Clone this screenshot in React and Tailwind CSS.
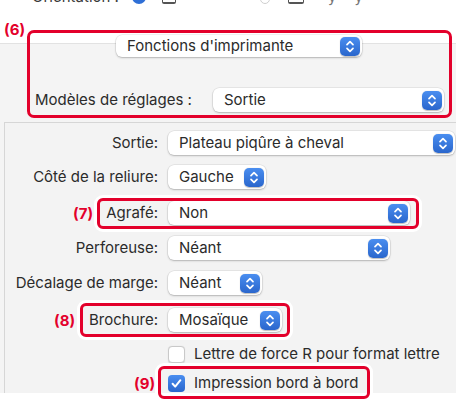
import React from 'react';

// Up/down stepper used by macOS popup buttons
function Stepper() {
  return (
    <span className="flex h-[19px] w-[20px] shrink-0 items-center justify-center rounded-[5px] bg-linear-to-b from-[#4a8ef0] to-[#2a66cc] shadow-[0_0.5px_1px_rgba(0,0,0,0.25)]">
      <svg width="20" height="19" viewBox="0 0 20 19" fill="none">
        <path d="M7 7.6 L10 4.6 L13 7.6" stroke="white" strokeWidth="1.7" strokeLinecap="round" strokeLinejoin="round" />
        <path d="M7 11.4 L10 14.4 L13 11.4" stroke="white" strokeWidth="1.7" strokeLinecap="round" strokeLinejoin="round" />
      </svg>
    </span>
  );
}

function Popup({ text, className }) {
  return (
    <div className={`flex items-center rounded-[6px] bg-white pl-[11px] pr-[2px] shadow-[0_0_0_0.5px_rgba(0,0,0,0.10),0_1px_2px_rgba(0,0,0,0.22)] ${className}`}>
      <span className="whitespace-nowrap">{text}</span>
      <span className="ml-auto">
        <Stepper />
      </span>
    </div>
  );
}

function Row({ label, text, popupClass, className = '' }) {
  return (
    <div className={`flex h-[24px] items-center ${className}`}>
      <span className="w-[153px] whitespace-nowrap text-right">{label}</span>
      <Popup text={text} className={`ml-[10px] h-[24px] ${popupClass}`} />
    </div>
  );
}

function Check({ checked }) {
  return checked ? (
    <span className="flex h-[17px] w-[17px] shrink-0 items-center justify-center rounded-[4px] bg-linear-to-b from-[#4a8ef0] to-[#2a66cc]">
      <svg width="13" height="13" viewBox="0 0 13 13" fill="none">
        <path d="M2.6 6.8 L5.2 9.6 L10.4 3.2" stroke="white" strokeWidth="2" strokeLinecap="round" strokeLinejoin="round" />
      </svg>
    </span>
  ) : (
    <span className="h-[17px] w-[17px] shrink-0 rounded-[4px] border border-[#c9c9c9] bg-white shadow-[0_0.5px_1px_rgba(0,0,0,0.12)]" />
  );
}

export default function App() {
  return (
    <div className="relative h-[404px] w-[456px] overflow-hidden bg-white font-['Inter',sans-serif] text-[15px] text-[#2b2b2b]">
      {/* cut-off Orientation row */}
      <div className="h-[6px] overflow-hidden">
        <div className="-mt-[12px] flex h-[18px] items-center pl-[32px] text-[#3a3a3a]">
          <span>Orientation :</span>
          <span className="ml-[13px] h-[14px] w-[14px] rounded-full bg-[#2f6fd6]" />
          <span className="ml-[16px] h-[14px] w-[14px] rounded-[2px] border-b-2 border-x border-[#555]" />
          <span className="ml-[84px] h-[14px] w-[10px] rounded-full border border-[#cfcfcf]" />
          <span className="ml-[18px] h-[14px] w-[16px] rounded-[2px] border-b-2 border-x border-[#555]" />
          <span className="ml-[24px] text-[#777]">y</span>
          <span className="ml-[18px] text-[#777]">y</span>
        </div>
      </div>
      <div className="h-[37px]" />

      {/* printer functions panel */}
      <div className="h-[79px] border-t border-[#e2e2e2] bg-[#f4f4f4]">
        <div className="-mt-[9px] flex pl-[116px]">
          <Popup text="Fonctions d'imprimante" className="h-[22px] w-[246px]" />
        </div>
        <div className="mt-[31px] flex h-[24px] items-center pl-[35px]">
          <span>Modèles de réglages :</span>
          <Popup text="Sortie" className="ml-auto mr-[12px] h-[24px] w-[231px]" />
        </div>
      </div>

      {/* group box */}
      <div className="bg-[#f4f4f4] pl-[4px]">
        <div className="flex h-[271px] flex-col border-l border-t border-[#d6d6d6] bg-[#f3f3f3] pt-[8px]">
          <Row label="Sortie:" text="Plateau piqûre à cheval" popupClass="w-[287px]" />
          <Row label="Côté de la reliure:" text="Gauche" popupClass="w-[98px]" className="mt-[10px]" />
          <Row label="Agrafé:" text="Non" popupClass="w-[242px]" className="mt-[12px]" />
          <Row label="Perforeuse:" text="Néant" popupClass="w-[222px]" className="mt-[11px]" />
          <Row label="Décalage de marge:" text="Néant" popupClass="w-[94px]" className="mt-[11px]" />
          <Row label="Brochure:" text="Mosaïque" popupClass="w-[114px]" className="mt-[13px]" />
          <div className="mt-[14px] flex h-[17px] items-center pl-[163px]">
            <Check />
            <span className="ml-[9px] whitespace-nowrap">Lettre de force R pour format lettre</span>
          </div>
          <div className="mt-[12px] flex h-[17px] items-center pl-[163px]">
            <Check checked />
            <span className="ml-[9px] whitespace-nowrap">Impression bord à bord</span>
          </div>
        </div>
      </div>

      {/* annotations */}
      <div className="absolute left-[27px] top-[30px] h-[88px] w-[425px] rounded-[7px] border-[3px] border-[#e3002b]" />
      <span className="absolute left-[4px] top-[19px] text-[15px] font-bold text-[#e3002b]">(6)</span>

      <div className="absolute left-[97px] top-[198px] h-[31px] w-[322px] rounded-[6px] border-[3px] border-[#e3002b] shadow-[0_0_0_3px_white]" />
      <span className="absolute left-[73px] top-[203px] text-[15px] font-bold text-[#e3002b]">(7)</span>

      <div className="absolute left-[80px] top-[303px] h-[34px] w-[210px] rounded-[6px] border-[3px] border-[#e3002b] shadow-[0_0_0_3px_white]" />
      <span className="absolute left-[54px] top-[310px] text-[15px] font-bold text-[#e3002b]">(8)</span>

      <div className="absolute left-[158px] top-[366px] h-[33px] w-[212px] rounded-[6px] border-[3px] border-[#e3002b] shadow-[0_0_0_3px_white]" />
      <span className="absolute left-[134px] top-[373px] text-[15px] font-bold text-[#e3002b]">(9)</span>
    </div>
  );
}
